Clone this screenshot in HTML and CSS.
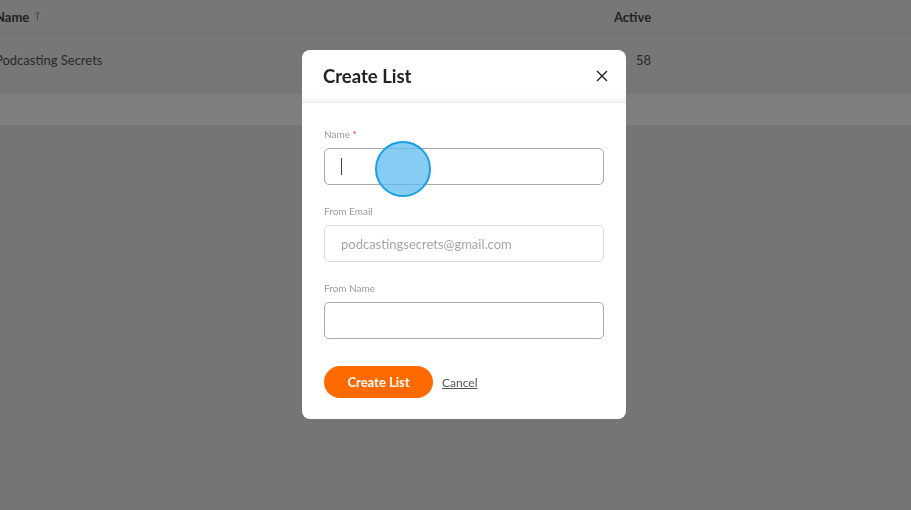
FILE: index.html
```html
<!DOCTYPE html>
<html lang="en">
<head>
    <meta charset="UTF-8">
    <meta name="viewport" content="width=device-width, initial-scale=1.0">
    <title>Lists</title>
    <link rel="stylesheet" href="styles.css">
</head>
<body>
    <!-- Tabla de listas (detrás del modal) -->
    <div class="lists-table">
        <div class="table-head">
            <div class="col-name">Name
                <svg class="sort-arrow" width="7" height="10" viewBox="0 0 7 10">
                    <path d="M3.5 10 V1 M0.8 3.6 L3.5 0.9 L6.2 3.6" stroke="#999" stroke-width="1" fill="none"/>
                </svg>
            </div>
            <div class="col-active">Active</div>
        </div>
        <div class="table-row">
            <div class="col-name cell">Podcasting Secrets</div>
            <div class="col-active cell">58</div>
        </div>
        <div class="table-foot"></div>
    </div>

    <div class="overlay"></div>

    <!-- Modal -->
    <div class="modal">
        <div class="modal-header">
            <h2>Create List</h2>
            <button class="close-btn" aria-label="Close">
                <svg width="12" height="12" viewBox="0 0 12 12">
                    <path d="M1 1 L11 11 M11 1 L1 11" stroke="#222" stroke-width="1.4" fill="none"/>
                </svg>
            </button>
        </div>
        <div class="modal-body">
            <div class="field">
                <label for="listName">Name <span class="req">*</span></label>
                <div class="input-wrap">
                    <input type="text" id="listName" class="text-input focused">
                    <span class="caret"></span>
                    <span class="click-dot"></span>
                </div>
            </div>
            <div class="field">
                <label for="fromEmail">From Email</label>
                <input type="text" id="fromEmail" class="text-input disabled" value="podcastingsecrets@gmail.com" readonly>
            </div>
            <div class="field">
                <label for="fromName">From Name</label>
                <input type="text" id="fromName" class="text-input">
            </div>
            <div class="actions">
                <button class="btn-primary">Create List</button>
                <a href="#" class="cancel-link">Cancel</a>
            </div>
        </div>
    </div>
</body>
</html>
```

FILE: styles.css
```css
body {
    margin: 0;
    font-family: Lato, "Noto Sans", sans-serif;
    background-color: #eaeaea;
    height: 510px;
    overflow: hidden;
}
.lists-table {
    margin-left: -5px;
}
.table-head, .table-row {
    display: flex;
    background-color: #efefef;
}
.table-head {
    height: 33px;
    align-items: center;
    border-bottom: 1px solid #e2e2e2;
    font-size: 13px;
    font-weight: 700;
    color: #444;
}
.table-row {
    height: 60px;
    font-size: 13px;
    color: #555;
}
.cell {
    padding-top: 18px;
}
.col-name {
    width: 619px;
    flex: none;
}
.col-active {
    width: 37px;
    text-align: right;
    white-space: nowrap;
}
.sort-arrow {
    margin-left: 2px;
    vertical-align: 1px;
}
.table-foot {
    height: 31px;
    background-color: #fff;
}
.overlay {
    position: fixed;
    inset: 0;
    background-color: rgba(0, 0, 0, 0.5);
}
.modal {
    position: fixed;
    left: 302px;
    top: 50px;
    width: 324px;
    height: 369px;
    background-color: #fff;
    border-radius: 8px;
    overflow: hidden;
}
.modal-header {
    height: 52px;
    display: flex;
    align-items: center;
    justify-content: space-between;
    padding: 0 18px 0 21px;
    border-bottom: 1px solid #e9e9e9;
    box-shadow: inset 0 -7px 8px -6px rgba(0, 0, 0, 0.07);
}
.modal-header h2 {
    margin: 0;
    font-size: 18.5px;
    font-weight: 700;
    color: #222;
}
.close-btn {
    background: none;
    border: none;
    padding: 0;
    display: flex;
    cursor: pointer;
}
.modal-body {
    padding: 25px 22px 0 22px;
}
.field {
    display: flex;
    flex-direction: column;
    gap: 8px;
    margin-bottom: 20px;
}
.field label {
    font-size: 10px;
    color: #9a9a9a;
}
.req {
    color: #e0383e;
}
.input-wrap {
    position: relative;
}
.text-input {
    box-sizing: border-box;
    width: 280px;
    height: 37px;
    border: 1px solid #a9a9a9;
    border-radius: 5px;
    padding: 0 16px;
    font-family: inherit;
    font-size: 13px;
    color: #333;
    outline: none;
}
.text-input.disabled {
    border-color: #dcdcdc;
    color: #a5a5a5;
}
.caret {
    position: absolute;
    left: 17px;
    top: 10px;
    width: 1px;
    height: 17px;
    background-color: #444;
}
.click-dot {
    position: absolute;
    left: 51px;
    top: -7px;
    width: 56px;
    height: 56px;
    box-sizing: border-box;
    border-radius: 50%;
    background-color: rgba(92, 188, 238, 0.75);
    border: 2px solid #1a9ee2;
}
.actions {
    display: flex;
    align-items: center;
    gap: 9px;
    margin-top: 27px;
}
.btn-primary {
    height: 32px;
    width: 109px;
    border: none;
    border-radius: 16px;
    background-color: #ff6a00;
    color: #fff;
    font-family: inherit;
    font-size: 13px;
    font-weight: 700;
    cursor: pointer;
}
.cancel-link {
    font-size: 12px;
    color: #555;
    text-decoration: underline;
}
```
